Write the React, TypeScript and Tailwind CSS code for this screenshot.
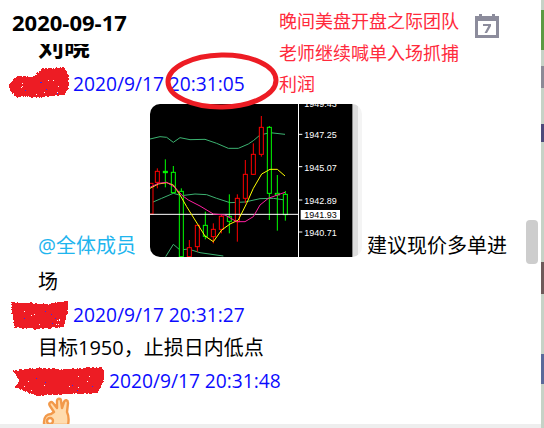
const BODY_FONT = "[font-family:'Open_Sans','Noto_Sans_CJK_SC',sans-serif]";

type Candle = { x: number; top: number; bot: number; bodyTop: number; bodyBot: number; up: boolean; fill?: boolean };

// coordinates read off the chart at 3x
const candles: Candle[] = [
  { x: 18, top: 250, bot: 342, bodyTop: 250, bodyBot: 342, up: false },
  { x: 37, top: 205, bot: 265, bodyTop: 214, bodyBot: 247, up: false },
  { x: 61, top: 178, bot: 262, bodyTop: 214, bodyBot: 218, up: true, fill: true },
  { x: 85, top: 198, bot: 280, bodyTop: 217, bodyBot: 278, up: true },
  { x: 109, top: 265, bot: 470, bodyTop: 274, bodyBot: 470, up: true },
  { x: 133, top: 420, bot: 470, bodyTop: 443, bodyBot: 470, up: false },
  { x: 157, top: 376, bot: 455, bodyTop: 376, bodyBot: 440, up: false },
  { x: 181, top: 335, bot: 418, bodyTop: 376, bodyBot: 409, up: true },
  { x: 205, top: 370, bot: 430, bodyTop: 388, bodyBot: 410, up: false },
  { x: 229, top: 343, bot: 400, bodyTop: 349, bodyBot: 388, up: false },
  { x: 253, top: 283, bot: 400, bodyTop: 349, bodyBot: 364, up: true },
  { x: 277, top: 283, bot: 425, bodyTop: 295, bodyBot: 365, up: false },
  { x: 301, top: 180, bot: 310, bodyTop: 223, bodyBot: 295, up: false },
  { x: 325, top: 130, bot: 225, bodyTop: 163, bodyBot: 223, up: false },
  { x: 349, top: 48, bot: 170, bodyTop: 82, bodyBot: 163, up: false },
  { x: 373, top: 78, bot: 360, bodyTop: 82, bodyBot: 280, up: true },
  { x: 397, top: 225, bot: 392, bodyTop: 280, bodyBot: 285, up: true },
  { x: 421, top: 273, bot: 362, bodyTop: 283, bodyBot: 344, up: true },
];

function Chart() {
  return (
    <svg viewBox="15 12 636 459" className="block h-[153px] w-[212px] shrink-0 rounded-[10px]">
      <rect x="15" y="12" width="636" height="459" fill="#f4f4f4" />
      <rect x="624" y="12" width="15" height="459" fill="#dcdcdc" />
      <rect x="15" y="12" width="606" height="459" fill="#000" />
      <rect x="621" y="12" width="3" height="459" fill="#8a8a8a" />
      <polyline fill="none" stroke="#3cb371" strokeWidth="3" points="15,117 45,110 65,112 85,127 105,113 135,119 180,118 215,130 250,145 280,145 310,132 325,122 345,105 375,98 420,103" />
      <polyline fill="none" stroke="#3cb371" strokeWidth="3" points="15,310 50,295 85,280 110,287 150,282 185,284 215,295 255,308 300,306 345,296 385,295 420,300" />
      <polyline fill="none" stroke="#3cb371" strokeWidth="3" points="62,470 85,433 105,450 130,447 165,458 235,468" />
      {candles.map(c => {
        const color = c.up ? '#00ff00' : '#ff0000';
        return (
          <g key={c.x}>
            <line x1={c.x} x2={c.x} y1={c.top} y2={c.bot} stroke={color} strokeWidth="3" />
            <rect
              x={c.x - 6}
              y={c.bodyTop}
              width="12"
              height={c.bodyBot - c.bodyTop}
              fill={c.fill ? color : '#000'}
              stroke={color}
              strokeWidth="3"
            />
          </g>
        );
      })}
      <line x1="15" x2="460" y1="343" y2="343" stroke="#fff" strokeWidth="3" />
      <polyline fill="none" stroke="#ffff00" strokeWidth="3" points="15,265 40,252 65,248 85,255 105,285 125,320 150,360 180,408 205,425 230,390 255,372 280,360 305,310 325,265 350,222 375,208 397,208 420,228" />
      <polyline fill="none" stroke="#ff1fa0" strokeWidth="3" points="15,262 40,250 65,247 90,262 110,285 130,300 165,318 205,342 240,345 275,365 300,365 325,350 345,315 370,295 397,285 420,277" />
      <rect x="459" y="12" width="3" height="459" fill="#fff" />
      {[
        [8, '1949.43'],
        [103, '1947.25'],
        [200, '1945.07'],
        [300, '1942.89'],
        [396, '1940.71'],
      ].map(([y, label]) => (
        <g key={label}>
          <line x1="460" x2="472" y1={y} y2={y} stroke="#fff" strokeWidth="3" />
          <text x="478" y={Number(y) + 12} fontSize="27" fontFamily="Liberation Sans, sans-serif" fill="#fff">
            {label}
          </text>
        </g>
      ))}
      <rect x="467" y="330" width="118" height="29" fill="#fff" />
      <text x="478" y="354" fontSize="27" fontFamily="Liberation Sans, sans-serif" fill="#000">
        1941.93
      </text>
    </svg>
  );
}

// paint-bucket style scribble: outline gets rough steps, a few specks inside
function Scribble({ w, h, outline, seed }: { w: number; h: number; outline: number[][]; seed: number }) {
  const rnd = (i: number) => {
    const v = Math.sin(i * 12.9898 + seed * 78.233) * 43758.5453;
    return v - Math.floor(v);
  };
  const pts: string[] = [];
  outline.forEach((p, i) => {
    const q = outline[(i + 1) % outline.length];
    const steps = Math.max(1, Math.round(Math.hypot(q[0] - p[0], q[1] - p[1])));
    for (let s = 0; s < steps; s++) {
      const jx = rnd(i * 100 + s) * 1.6 - 0.8;
      const jy = rnd(i * 200 + s + 7) * 1.6 - 0.8;
      pts.push(`${Math.round(p[0] + ((q[0] - p[0]) * s) / steps + jx)},${Math.round(p[1] + ((q[1] - p[1]) * s) / steps + jy)}`);
    }
  });
  const specks = Array.from({ length: 14 }, (_, i) => ({
    x: Math.round(rnd(i + 300) * (w - 16)) + 8,
    y: Math.round(rnd(i + 500) * (h - 14)) + 9,
    blue: i % 3 === 0,
  }));
  return (
    <svg width={w} height={h} viewBox={`0 0 ${w} ${h}`} shapeRendering="crispEdges" className="block shrink-0 overflow-visible">
      <polygon points={pts.join(' ')} fill="#ed1c24" />
      {specks.map((s, i) => (
        <rect key={i} x={s.x} y={s.y} width="1" height="1" fill={s.blue ? '#2a2aff' : '#ffffff'} />
      ))}
    </svg>
  );
}

function Stamp({ time }: { time: string }) {
  return <span className="text-[19.2px] leading-[33px] text-[#0b0bff]">{time}</span>;
}

function CalendarIcon() {
  return (
    <svg width="24" height="24" viewBox="0 0 24 24" className="block">
      <path d="M0 2h4V0h3v2h10V0h3v2h4v22H0z" fill="#8c8c9c" />
      <rect x="3" y="7" width="18" height="14" fill="#fff" />
      <path d="M8 10h8v2l-4 7h-2.500l3.800-7H8z" fill="#8c8c9c" />
    </svg>
  );
}

function HandIcon() {
  return (
    <svg width="32" height="28" viewBox="0 0 32 28" className="block">
      <g fill="#ffdcae" stroke="#f2994a" strokeWidth="2.400" strokeLinejoin="round">
        <path d="M2 25c0-5 3-8 7-8l3-2-4-6c-2-3 1-5 3-3l4 5 0-7c0-3 4-3 4 0l1 7 2-6c1-3 4-2 4 1l-1 9c2 4 2 8 1 13H2z" />
        <circle cx="8" cy="24" r="3" fill="#fff" />
      </g>
    </svg>
  );
}

export default function App() {
  return (
    <div className={`${BODY_FONT} relative flex h-[428px] w-[544px] overflow-hidden bg-white text-black`}>
      <div className="flex w-[541px] shrink-0 flex-col">
        <div className="flex-1 overflow-hidden">
          <div className="pl-3 pt-[9px] text-[22px] font-bold leading-[26px]">2020-09-17</div>
          <div className="ml-[38px] mt-[9px] h-[15px] overflow-hidden">
            <div className="-mt-[11px] text-[26px] font-bold leading-[26px]">刘晓</div>
          </div>
          <div className="mt-[8px] flex h-[33px] items-center gap-[5px] pl-[9px]">
            <Scribble
              w={59}
              h={33}
              seed={1}
              outline={[[0, 18], [6, 10], [25, 9], [33, 2], [55, 0], [59, 8], [59, 22], [55, 28], [30, 30], [8, 30], [2, 25]]}
            />
            <Stamp time="2020/9/17 20:31:05" />
          </div>
          <div className="mt-[4px] flex items-end pl-[38px]">
            <span className="w-[112px] shrink-0 text-[20px] leading-[22px] text-[#1fb5ee]">@全体成员</span>
            <Chart />
            <span className="ml-[5px] whitespace-nowrap text-[20px] leading-[22px]">建议现价多单进</span>
          </div>
          <div className="mt-[8px] pl-[38px] text-[20px] leading-[33px]">场</div>
          <div className="flex h-[33px] items-center gap-[5px] pl-[11px]">
            <Scribble
              w={57}
              h={30}
              seed={2}
              outline={[[0, 2], [16, 3], [36, 4], [56, 1], [56, 14], [52, 27], [26, 29], [4, 28], [1, 14]]}
            />
            <Stamp time="2020/9/17 20:31:27" />
          </div>
          <div className="pl-[38px] text-[20px] leading-[33px]">目标1950，止损日内低点</div>
          <div className="flex h-[33px] items-center gap-[5px] pl-[13px]">
            <Scribble
              w={91}
              h={30}
              seed={3}
              outline={[[0, 5], [22, 2], [50, 3], [90, 1], [91, 14], [84, 27], [50, 28], [24, 30], [2, 21], [6, 14]]}
            />
            <Stamp time="2020/9/17 20:31:48" />
          </div>
          <div className="pl-[42px]">
            <HandIcon />
          </div>
        </div>
        <div className="h-[4px] shrink-0 bg-[#eeeeee]" />
      </div>
      <div className="flex w-[3px] shrink-0 flex-col bg-[#c6d2c6]">
        <div className="mt-[10px] h-[40px] bg-[#5c9a42]" />
        <div className="mt-[16px] h-[22px] bg-[#8c8a96]" />
        <div className="mt-[36px] h-[18px] bg-[#4d4a7a]" />
        <div className="mt-[120px] h-[32px] bg-[#6e5a5a]" />
        <div className="mt-[60px] h-[30px] bg-[#5a6a9a]" />
      </div>

      {/* red note pasted over the message */}
      <div className="absolute left-[279px] top-[6px] w-[184px] text-[18px] leading-[31.500px] text-[#ff2a3c]">
        晚间美盘开盘之际团队老师继续喊单入场抓捕利润
      </div>
      <div className="absolute left-[475px] top-[14px]">
        <CalendarIcon />
      </div>
      {/* hand drawn circle round the first timestamp */}
      <svg width="120" height="64" viewBox="0 0 120 64" className="absolute left-[162px] top-[49px]">
        <ellipse cx="60" cy="32" rx="54" ry="26" fill="none" stroke="#ed1c24" strokeWidth="5" transform="rotate(-1 60 32)" />
      </svg>
      <div className="absolute left-[526px] top-[220px] h-[44px] w-[12px] rounded-[4px] bg-[#cdcdcd]" />
    </div>
  );
}
